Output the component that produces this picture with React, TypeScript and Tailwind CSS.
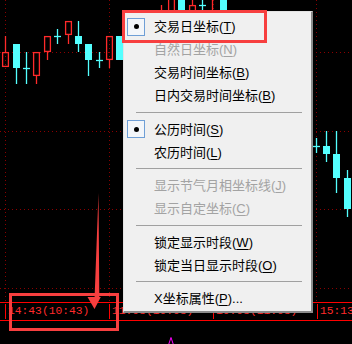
import React from 'react';

type Candle = { k: 'r' | 'c' | 'x'; x: number; bt: number; bb: number; wt: number; wb: number };

// k线数据: r = 阳线(空心红), c = 阴线(实心青), x = 十字星
const candles: Candle[] = [
  { k: 'r', x: 2, bt: 52, bb: 67, wt: 36, wb: 67 },
  { k: 'c', x: 13, bt: 44, bb: 68, wt: 44, wb: 84 },
  { k: 'x', x: 23, bt: 68, bb: 68, wt: 52, wb: 84 },
  { k: 'r', x: 33, bt: 52, bb: 76, wt: 52, wb: 84 },
  { k: 'r', x: 44, bt: 36, bb: 52, wt: 36, wb: 60 },
  { k: 'x', x: 54, bt: 36, bb: 36, wt: 29, wb: 44 },
  { k: 'r', x: 65, bt: 21, bb: 35, wt: 21, wb: 44 },
  { k: 'c', x: 75, bt: 36, bb: 44, wt: 21, wb: 52 },
  { k: 'c', x: 85, bt: 44, bb: 60, wt: 44, wb: 76 },
  { k: 'x', x: 96, bt: 60, bb: 60, wt: 52, wb: 68 },
  { k: 'r', x: 106, bt: 36, bb: 60, wt: 36, wb: 68 },
  { k: 'c', x: 116, bt: 36, bb: 60, wt: 36, wb: 60 },
  { k: 'r', x: 158, bt: 14, bb: 30, wt: 5, wb: 40 },
  { k: 'r', x: 168, bt: -5, bb: 40, wt: -5, wb: 40 },
  { k: 'c', x: 178, bt: -5, bb: 30, wt: -5, wb: 30 },
  { k: 'r', x: 189, bt: 5, bb: 30, wt: -5, wb: 30 },
  { k: 'x', x: 199, bt: 5, bb: 5, wt: -5, wb: 15 },
  { k: 'r', x: 209, bt: 14, bb: 30, wt: -5, wb: 30 },
  { k: 'c', x: 220, bt: -5, bb: 30, wt: -5, wb: 30 },
  { k: 'x', x: 313, bt: 146, bb: 146, wt: 138, wb: 153 },
  { k: 'c', x: 323, bt: 146, bb: 154, wt: 131, wb: 162 },
  { k: 'c', x: 333, bt: 154, bb: 178, wt: 131, wb: 193 },
  { k: 'c', x: 344, bt: 178, bb: 209, wt: 170, wb: 217 },
];

const RED = '#ff2a2a';
const CYAN = '#54ffff';

function Chart() {
  return (
    <svg width={352} height={302} className="block">
      {[52, 131, 209, 288].map(y => (
        <line key={y} x1={0} x2={352} y1={y + 0.5} y2={y + 0.5} stroke="#8b0000" strokeDasharray="1 3" />
      ))}
      {[5, 109, 213, 316].map(x => (
        <line key={x} x1={x + 0.5} x2={x + 0.5} y1={0} y2={302} stroke="#8b0000" strokeDasharray="1 3" />
      ))}
      {candles.map((c, i) => {
        const cx = c.x + 3.5;
        if (c.k === 'x') {
          return (
            <g key={i} stroke={CYAN} strokeWidth={1.3}>
              <line x1={cx} x2={cx} y1={c.wt} y2={c.wb} />
              <line x1={c.x} x2={c.x + 7} y1={c.bt + 0.5} y2={c.bt + 0.5} />
            </g>
          );
        }
        if (c.k === 'c') {
          return (
            <g key={i}>
              <line x1={cx} x2={cx} y1={c.wt} y2={c.wb} stroke={CYAN} strokeWidth={1.3} />
              <rect x={c.x} y={c.bt} width={7} height={c.bb - c.bt} fill={CYAN} />
            </g>
          );
        }
        return (
          <g key={i} stroke={RED} strokeWidth={1.3} fill="none">
            <line x1={cx} x2={cx} y1={c.wt} y2={c.bt} />
            <line x1={cx} x2={cx} y1={c.bb} y2={c.wb} />
            <rect x={c.x + 0.6} y={c.bt + 0.6} width={5.8} height={c.bb - c.bt - 1.2} />
          </g>
        );
      })}
    </svg>
  );
}

type Item =
  | { sep: true }
  | { sep?: false; label: string; key: string; tail?: string; checked?: boolean; disabled?: boolean };

const items: Item[] = [
  { label: '交易日坐标', key: 'T', checked: true },
  { label: '自然日坐标', key: 'N', disabled: true },
  { label: '交易时间坐标', key: 'B' },
  { label: '日内交易时间坐标', key: 'B' },
  { sep: true },
  { label: '公历时间', key: 'S', checked: true },
  { label: '农历时间', key: 'L' },
  { sep: true },
  { label: '显示节气月相坐标线', key: 'J', disabled: true },
  { label: '显示自定坐标', key: 'C', disabled: true },
  { sep: true },
  { label: '锁定显示时段', key: 'W' },
  { label: '锁定当日显示时段', key: 'O' },
  { sep: true },
  { label: 'X坐标属性', key: 'P', tail: '...' },
];

function ContextMenu() {
  return (
    <div
      className="absolute left-[123px] top-[11px] w-[190px] bg-[#f0f0f0] border-t border-l border-[#e3e3e3] border-r-2 border-b-2 border-r-[#8c8c8c] border-b-[#8c8c8c] pt-[3px] pb-[1px]"
      style={{ fontFamily: '"Liberation Sans", "Noto Sans CJK SC", sans-serif' }}
    >
      {items.map((it, i) =>
        it.sep ? (
          <div key={i} className="h-[10.5px] flex items-center pl-[12px] pr-[9px]">
            <div className="w-full border-t border-[#a0a0a0]" />
          </div>
        ) : (
          <div key={i} className="h-[23px] flex items-center">
            <div className="w-[30px] pl-[3px] flex items-center">
              {it.checked && (
                <div className="w-[18px] h-[18px] border border-[#6f9fd6] bg-[#f3f6fa] flex items-center justify-center">
                  <div className="w-[5px] h-[5px] rounded-full bg-black" />
                </div>
              )}
            </div>
            <span className={`text-[13px] leading-none ${it.disabled ? 'text-[#a3a3a3]' : 'text-black'}`}>
              {it.label}(<span className="underline underline-offset-2">{it.key}</span>){it.tail}
            </span>
          </div>
        )
      )}
    </div>
  );
}

const axisLabels = ['14:43(10:43)', '11:03(10:03)', '10:03(11:03)', '15:13'];

export default function App() {
  return (
    <div className="relative w-[352px] h-[344px] bg-black overflow-hidden">
      <Chart />

      {/* 时间轴 */}
      <div className="h-[19px] border-y border-[#ff0000] flex pl-[5px]">
        {axisLabels.map((t, i) => (
          <div key={i} className="w-[104px] shrink-0 flex items-center my-[1px] border-l border-[#ff0000] pl-[2px]">
            <span
              className="text-[11.3px] leading-none text-[#ff2a2a] whitespace-nowrap"
              style={{ fontFamily: '"Liberation Mono", monospace' }}
            >
              {t}
            </span>
          </div>
        ))}
      </div>

      <div className="pl-[168px] pt-[16px]">
        <svg width={6} height={8} className="block">
          <polyline points="0.5,8 3,0.5 5.5,8" fill="none" stroke="#ff00ff" strokeWidth={1} />
        </svg>
      </div>

      <ContextMenu />

      {/* 标注 */}
      <div className="absolute left-[122px] top-[10px] w-[145px] h-[33px] border-[3px] border-[#f73f3f]" />
      <div className="absolute left-[9px] top-[293px] w-[110px] h-[38px] border-[3px] border-[#f73f3f]" />
      <svg className="absolute left-0 top-0" width={352} height={344}>
        <polygon points="98.5,193 99.3,297 100.8,297 94.5,309 87.5,297 94.6,297" fill="#f73f3f" />
      </svg>
    </div>
  );
}
